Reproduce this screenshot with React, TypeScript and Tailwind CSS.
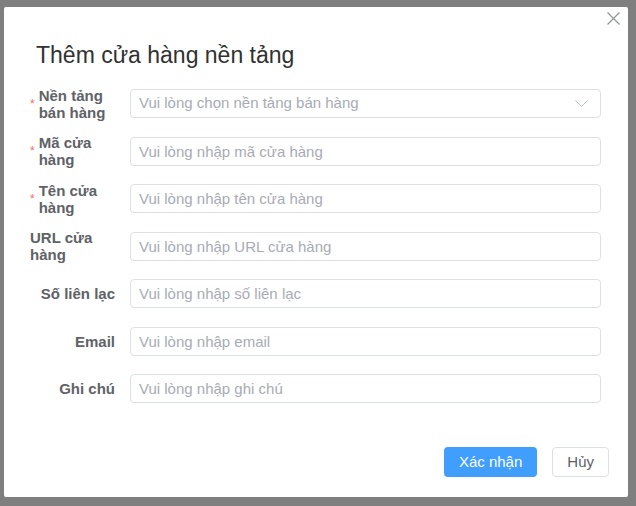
import type { ReactNode } from 'react'

const FIELDS = [
  { label: 'Nền tảng bán hàng', placeholder: 'Vui lòng chọn nền tảng bán hàng', required: true, select: true },
  { label: 'Mã cửa hàng', placeholder: 'Vui lòng nhập mã cửa hàng', required: true },
  { label: 'Tên cửa hàng', placeholder: 'Vui lòng nhập tên cửa hàng', required: true },
  { label: 'URL cửa hàng', placeholder: 'Vui lòng nhập URL cửa hàng' },
  { label: 'Số liên lạc', placeholder: 'Vui lòng nhập số liên lạc' },
  { label: 'Email', placeholder: 'Vui lòng nhập email' },
  { label: 'Ghi chú', placeholder: 'Vui lòng nhập ghi chú' },
]

function Row({ label, required, children }: { label: string; required?: boolean; children: ReactNode }) {
  return (
    <div className="flex h-[29px] items-center">
      <div className="flex w-[100px] shrink-0 items-center justify-end pr-[15px]">
        {required && <span className="mr-[4px] text-[12px] leading-[12px] text-[#f56c6c]">*</span>}
        <span className="text-[15px] leading-[17px] font-bold text-[#606266]">{label}</span>
      </div>
      {children}
    </div>
  )
}

export default function App() {
  return (
    <div className="h-[506px] w-full bg-[#7f7f7f] pt-[7px] pl-[4px] font-['Liberation_Sans',Arial,sans-serif]">
      <div className="relative flex h-[490px] w-[624px] flex-col rounded-[2px] bg-white">
        <button className="absolute top-[5px] right-[8px] text-[#909399]" aria-label="Đóng">
          <svg width="13" height="13" viewBox="0 0 13 13" fill="none" stroke="currentColor" strokeWidth="1.2">
            <path d="M0.5 0.5 L12.5 12.5 M12.5 0.5 L0.5 12.5" />
          </svg>
        </button>

        <h2 className="pt-[34px] pl-[32px] text-[23px] leading-[28px] font-normal text-[#303133]">
          Thêm cửa hàng nền tảng
        </h2>

        <form className="mt-[20px] mr-[27px] ml-[26px] flex flex-col gap-[18.5px]">
          {FIELDS.map((f) => (
            <Row key={f.label} label={f.label} required={f.required}>
              {f.select ? (
                <div className="flex h-full flex-1 items-center justify-between rounded-[4px] border border-[#dcdfe6] pr-[12px] pl-[8px]">
                  <span className="text-[15px] text-[#a8abb2]">{f.placeholder}</span>
                  <svg width="13" height="7" viewBox="0 0 13 7" fill="none" stroke="#c0c4cc" strokeWidth="1">
                    <path d="M0.5 0.5 L6.5 6.5 L12.5 0.5" />
                  </svg>
                </div>
              ) : (
                <input
                  className="h-full flex-1 rounded-[4px] border border-[#dcdfe6] pl-[8px] text-[15px] text-[#606266] outline-none placeholder:text-[#a8abb2]"
                  placeholder={f.placeholder}
                />
              )}
            </Row>
          ))}
        </form>

        <footer className="mt-[44px] flex justify-end gap-[15px] pr-[19px]">
          <button className="h-[30px] rounded-[4px] bg-[#409eff] px-[15px] text-[15px] text-white">Xác nhận</button>
          <button className="h-[30px] rounded-[4px] border border-[#dcdfe6] bg-white px-[14px] text-[15px] text-[#606266]">
            Hủy
          </button>
        </footer>
      </div>
    </div>
  )
}
